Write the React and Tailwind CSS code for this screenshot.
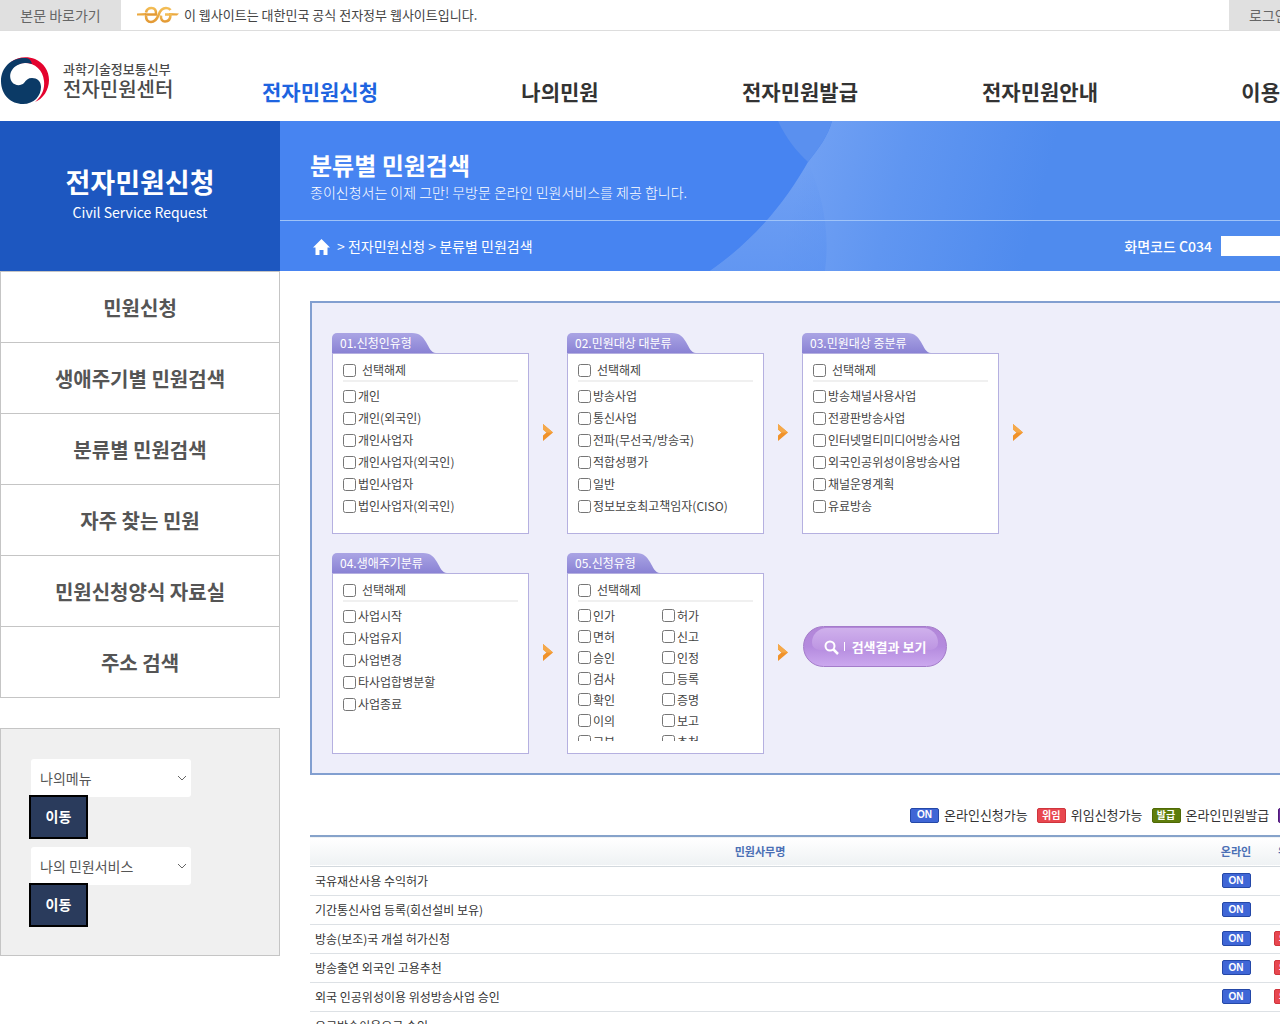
import React from 'react';
import clsx from 'clsx';

const NAV = ['전자민원신청', '나의민원', '전자민원발급', '전자민원안내', '이용안내'];

const SIDE_MENU = [
  '민원신청',
  '생애주기별 민원검색',
  '분류별 민원검색',
  '자주 찾는 민원',
  '민원신청양식 자료실',
  '주소 검색',
];

const FILTER_ROWS = [
  [
    {
      id: 'applicant',
      title: '01.신청인유형',
      items: ['개인', '개인(외국인)', '개인사업자', '개인사업자(외국인)', '법인사업자', '법인사업자(외국인)'],
    },
    {
      id: 'large',
      title: '02.민원대상 대분류',
      items: ['방송사업', '통신사업', '전파(무선국/방송국)', '적합성평가', '일반', '정보보호최고책임자(CISO)'],
    },
    {
      id: 'middle',
      title: '03.민원대상 중분류',
      items: ['방송채널사용사업', '전광판방송사업', '인터넷멀티미디어방송사업', '외국인공위성이용방송사업', '채널운영계획', '유료방송'],
    },
  ],
  [
    {
      id: 'life',
      title: '04.생애주기분류',
      items: ['사업시작', '사업유지', '사업변경', '타사업합병분할', '사업종료'],
    },
    {
      id: 'kind',
      title: '05.신청유형',
      twoColumns: true,
      items: ['인가', '허가', '면허', '신고', '승인', '인정', '검사', '등록', '확인', '증명', '이의', '보고', '교부', '추천'],
    },
  ],
];

const SERVICES = [
  { name: '국유재산사용 수익허가', online: true, delegate: false },
  { name: '기간통신사업 등록(회선설비 보유)', online: true, delegate: false },
  { name: '방송(보조)국 개설 허가신청', online: true, delegate: true },
  { name: '방송출연 외국인 고용추천', online: true, delegate: true },
  { name: '외국 인공위성이용 위성방송사업 승인', online: true, delegate: true },
  { name: '유료방송이용요금 승인', online: false, delegate: false },
];

const BADGE_STYLES = {
  on: "bg-[#3f66d6] border-[#2448a8] font-['Liberation_Sans',sans-serif]",
  delegate: 'bg-[#e8474f] border-[#cf353d]',
  issue: 'bg-[#5f7d0c] border-[#4f6a06]',
  visit: 'bg-[#6a2a9c] border-[#4f1c78]',
};

function Badge({ kind, children }) {
  return (
    <span
      className={clsx(
        'inline-flex h-[15px] w-[29px] shrink-0 items-center justify-center rounded-[2px] border text-[10px] leading-none font-bold text-white',
        BADGE_STYLES[kind],
      )}
    >
      {children}
    </span>
  );
}

function EgMark() {
  return (
    <svg width="42" height="18" viewBox="0 0 42 18" aria-hidden="true">
      <defs>
        <linearGradient id="eg-gold" x1="0" y1="0" x2="0" y2="1">
          <stop offset="0" stopColor="#f3bd55" />
          <stop offset="1" stopColor="#e39a35" />
        </linearGradient>
      </defs>
      <path d="M0 7.500 9 7V9.500H0Z" fill="#eba940" />
      <path d="M42 7.500 32 7V9.500H40Z" fill="#eba940" />
      <g fill="none" stroke="url(#eg-gold)" strokeWidth="2.600">
        <path d="M8 8.500H19C19.500 4 17.500 2 14.500 2S9.500 4 9 6.500" />
        <path d="M9 10C9 14 11 16 14 16 18 16 20 13 21.500 9 23 4.500 25 2 29 2 31 2 32.500 2.500 33.500 4" />
        <path d="M24 9.500C23.500 13.500 25.500 15.500 28 15.500 31.500 15.500 33.500 13 33.500 8.500H28" />
      </g>
    </svg>
  );
}

function GovEmblem() {
  return (
    <svg width="50" height="48" viewBox="0 0 50 48" aria-hidden="true">
      <path d="M11 5C17 0 27-1 35 2c9 4 14 12 14 21 0 10-6 19-14 22 6-5 10-12 9-21C43 13 35 6 25 6c-5 0-10 2-13 5Z" fill="#e4032e" />
      <path d="M26 1C12 0 1 10 1 24s10 23 22 23c11 0 18-8 18-17 0-6-4-9-9-9-4 0-6 2-8 5-3 3-9 3-12-1C7 17 13 7 25 6c3 0 5 0 7 1C31 3 29 1 26 1Z" fill="#0b3a66" />
    </svg>
  );
}

function StepArrow() {
  return (
    <div className="mb-[2px] flex w-[38px] shrink-0 justify-center">
      <svg width="10" height="17" viewBox="0 0 10 17" aria-hidden="true">
        <path d="M0 0 10 8.500 0 17V11.500L3.500 8.500 0 5.500Z" fill="#f0922a" />
        <path d="M0 0 10 8.500H3.500L0 5.500Z" fill="#f5a94a" />
      </svg>
    </div>
  );
}

function FilterCard({ filter }) {
  return (
    <fieldset className="w-[197px] shrink-0">
      <legend className="flex h-5">
        <span className="rounded-tl-[5px] bg-linear-to-b from-[#aaa4e4] to-[#8a82d4] pl-2 text-[12px] leading-5 text-white">
          {filter.title}
        </span>
        <svg width="24" height="20" viewBox="0 0 24 20" aria-hidden="true">
          <defs>
            <linearGradient id={`tab-${filter.id}`} x1="0" y1="0" x2="0" y2="1">
              <stop offset="0" stopColor="#aaa4e4" />
              <stop offset="1" stopColor="#8a82d4" />
            </linearGradient>
          </defs>
          <path d="M0 0C8 0 11 4 14 9S19 20 24 20H0Z" fill={`url(#tab-${filter.id})`} />
        </svg>
      </legend>
      <div className="h-[181px] border border-[#b5b0e0] bg-white px-[10px]">
        <label className="flex h-7 items-center gap-[6px] border-b-2 border-[#f0f0f0] pt-[6px] text-[12px] leading-5">
          <input type="checkbox" className="size-[13px]" />
          선택해제
        </label>
        <ul
          className={clsx(
            'mt-[3px] h-[136px] overflow-hidden text-[12px]',
            filter.twoColumns && 'grid grid-cols-[84px_84px] auto-rows-[21px]',
          )}
        >
          {filter.items.map((item) => (
            <li key={item} className={filter.twoColumns ? 'h-[21px]' : 'h-[22px]'}>
              <label className="flex h-full items-center gap-[2px] leading-5 whitespace-nowrap">
                <input type="checkbox" className="size-[13px]" />
                {item}
              </label>
            </li>
          ))}
        </ul>
      </div>
    </fieldset>
  );
}

function QuickSelect({ id, label }) {
  return (
    <div>
      <label htmlFor={id} className="sr-only">{label}</label>
      <div className="relative w-40">
        <select
          id={id}
          className="block h-[38px] w-full appearance-none rounded-[3px] bg-white pl-[9px] text-[14px] text-[#555]"
        >
          <option>{label}</option>
        </select>
        <svg
          className="pointer-events-none absolute top-4 right-1"
          width="10"
          height="7"
          viewBox="0 0 10 7"
          fill="none"
          stroke="#666"
          aria-hidden="true"
        >
          <path d="M1 1 5 5 9 1" />
        </svg>
      </div>
      <button
        type="button"
        className="relative block h-10 w-[55px] bg-[#2a3b5c] pb-[2px] text-[14px] font-bold text-white outline-2 outline-black"
      >
        이동
      </button>
    </div>
  );
}

function TopBar() {
  return (
    <div className="flex h-[31px] items-center border-b border-[#ddd]">
      <a href="#content" className="h-[30px] w-[121px] bg-[#e0e0e0] text-center text-[14px] leading-[30px] text-[#666]">
        본문 바로가기
      </a>
      <div className="flex items-center gap-[5px] pl-4">
        <EgMark />
        <span className="text-[13px] text-[#444]">이 웹사이트는 대한민국 공식 전자정부 웹사이트입니다.</span>
      </div>
      <div className="ml-auto flex h-[30px] w-[171px] items-center gap-6 bg-[#e0e0e0] pl-5 text-[14px] text-[#666]">
        <a href="#login">로그인</a>
        <a href="#join">회원가입</a>
      </div>
    </div>
  );
}

function Header() {
  return (
    <header className="flex h-[90px]">
      <a href="#home" className="flex w-[200px] items-center gap-[13px] pt-[10px]">
        <GovEmblem />
        <span className="pb-[2px] text-[#4a4a4a]">
          <span className="block text-[13px] leading-[18px] font-medium">과학기술정보통신부</span>
          <span className="block text-[20px] leading-[22px] font-medium">전자민원센터</span>
        </span>
      </a>
      <nav className="flex flex-1 pt-[30px]">
        {NAV.map((item, i) => (
          <a
            key={item}
            href="#menu"
            className={clsx(
              'flex-1 text-center text-[21px] leading-[60px] font-bold',
              i === 0 ? 'text-[#1e64e0]' : 'text-[#333]',
            )}
          >
            {item}
          </a>
        ))}
      </nav>
    </header>
  );
}

function Sidebar() {
  return (
    <aside className="w-[280px] shrink-0">
      <div className="flex h-[150px] flex-col items-center bg-[#1d57c0] pt-[42px] text-white">
        <h2 className="text-[27px] leading-[38px] font-bold">전자민원신청</h2>
        <p className="text-[14px] leading-[22px]">Civil Service Request</p>
      </div>
      <ul className="border-x border-b border-[#c5c5c5]">
        {SIDE_MENU.map((item) => (
          <li key={item} className="border-t border-[#c5c5c5]">
            <a href="#side" className="block pt-[2px] text-center text-[20px] leading-[68px] font-bold text-[#555]">
              {item}
            </a>
          </li>
        ))}
      </ul>
      <div className="mt-[30px] flex flex-col gap-[10px] border border-[#c5c5c5] bg-[#f0f0f0] p-[30px]">
        <QuickSelect id="my-menu" label="나의메뉴" />
        <QuickSelect id="my-service" label="나의 민원서비스" />
      </div>
    </aside>
  );
}

function Banner() {
  return (
    <div className="relative bg-[#4784f1] text-white">
      <svg
        className="absolute inset-0 size-full"
        viewBox="0 0 1120 150"
        preserveAspectRatio="xMinYMin slice"
        aria-hidden="true"
      >
        <defs>
          <linearGradient id="glow" gradientUnits="userSpaceOnUse" x1="530" y1="20" x2="760" y2="80">
            <stop offset="0" stopColor="#70a0f3" />
            <stop offset="0.4" stopColor="#6096f1" />
            <stop offset="1" stopColor="#4f8bee" />
          </linearGradient>
          <linearGradient id="haze" x1="0" y1="0" x2="0" y2="1">
            <stop offset="0" stopColor="#5890f1" stopOpacity="0" />
            <stop offset="1" stopColor="#5890f1" stopOpacity="0.6" />
          </linearGradient>
        </defs>
        <path d="M430 150C480 115 508 76 528 41 539 27 548 15 552 0H1120V150Z" fill="url(#glow)" />
        <path d="M498 0C506 17 516 30 528 41 539 27 548 15 552 0Z" fill="#5a90ef" />
        <path d="M528 41C543 75 550 110 545 150H430C480 115 508 76 528 41Z" fill="url(#haze)" />
      </svg>
      <div className="relative h-[100px] border-b border-[#9fc3f8] pt-[27px] pl-[30px]">
        <h1 className="text-[24px] leading-[34px] font-bold">분류별 민원검색</h1>
        <p className="text-[14px] leading-5 font-light">종이신청서는 이제 그만! 무방문 온라인 민원서비스를 제공 합니다.</p>
      </div>
      <div className="relative flex h-[50px] items-center pr-[30px] pl-[33px] text-[14px]">
        <svg width="17" height="18" viewBox="0 0 17 18" fill="#fff" aria-hidden="true">
          <path d="M8.500 2 17 10.500H14.500V18H10.500V13H6.500V18H2.500V10.500H0Z" />
        </svg>
        <span className="ml-[7px]">&gt; 전자민원신청 &gt; 분류별 민원검색</span>
        <label htmlFor="screen-code" className="ml-auto font-medium">화면코드 C034</label>
        <input id="screen-code" type="text" className="ml-[9px] h-5 w-[149px] bg-white text-[#333]" />
      </div>
    </div>
  );
}

function SearchButton() {
  return (
    <button
      type="button"
      className="relative mb-[14px] ml-px flex h-[41px] w-36 items-center justify-center rounded-full border border-[#a47cca] bg-linear-to-b from-[#b286d8] via-[#b48ade] to-[#cba8ee] text-[13px] font-bold text-white"
    >
      <span className="absolute inset-x-2 top-px h-[22px] rounded-t-[16px] rounded-b-[8px] bg-linear-to-b from-[#cfb0ec] to-[#bd95e2]" />
      <svg className="relative" width="28" height="16" viewBox="0 0 28 16" fill="none" stroke="#fff" aria-hidden="true">
        <circle cx="6" cy="7" r="4.500" strokeWidth="2" />
        <path d="M9.500 10.500 14 15" strokeWidth="2.500" />
        <path d="M20.500 3V12" />
      </svg>
      <span className="relative">검색결과 보기</span>
    </button>
  );
}

function FilterPanel() {
  return (
    <form className="flex flex-col gap-[19px] border-2 border-[#829fd0] bg-[#eeeefa] pt-[30px] pb-[19px] pl-5 text-[#444]">
      {FILTER_ROWS.map((row, i) => (
        <div key={row[0].id} className="flex items-center">
          {row.map((filter) => (
            <React.Fragment key={filter.id}>
              <FilterCard filter={filter} />
              <StepArrow />
            </React.Fragment>
          ))}
          {i === 1 && <SearchButton />}
        </div>
      ))}
    </form>
  );
}

function Legend() {
  const entries = [
    { kind: 'on', mark: 'ON', text: '온라인신청가능' },
    { kind: 'delegate', mark: '위임', text: '위임신청가능' },
    { kind: 'issue', mark: '발급', text: '온라인민원발급' },
    { kind: 'visit', mark: '방문', text: '방문우편신청' },
  ];
  return (
    <ul className="flex h-[60px] items-center gap-[9px] pt-5 pl-[600px] text-[13px] text-[#333]">
      {entries.map((entry) => (
        <li key={entry.kind} className="flex items-center gap-[5px] whitespace-nowrap">
          <Badge kind={entry.kind}>{entry.mark}</Badge>
          {entry.text}
        </li>
      ))}
    </ul>
  );
}

function ServiceTable() {
  return (
    <table className="w-full table-fixed border-collapse text-[12px] text-[#333]">
      <thead>
        <tr className="h-[30px] border-t-2 border-b border-t-[#86a3ca] border-b-[#d3d9de] bg-linear-to-b from-white to-[#eff2f4] text-[11px] text-[#4a6fb5]">
          <th className="font-bold">민원사무명</th>
          <th className="w-[52px] font-bold">온라인</th>
          <th className="w-[52px] font-bold">위임</th>
          <th className="w-[43px] font-bold">발급</th>
          <th className="w-[43px] font-bold">방문</th>
        </tr>
      </thead>
      <tbody>
        {SERVICES.map((service) => (
          <tr key={service.name} className="h-[29px] border-b border-[#dde1e5]">
            <td className="pl-[5px]"><a href="#service">{service.name}</a></td>
            <td>
              <div className="flex justify-center">
                {service.online && <Badge kind="on">ON</Badge>}
              </div>
            </td>
            <td>
              <div className="flex justify-center">
                {service.delegate && <Badge kind="delegate">위임</Badge>}
              </div>
            </td>
            <td />
            <td />
          </tr>
        ))}
      </tbody>
    </table>
  );
}

export default function App() {
  return (
    <div className="overflow-x-clip bg-white font-['Noto_Sans_CJK_KR',sans-serif]">
      <div className="min-w-[1400px]">
        <TopBar />
        <Header />
        <div className="flex">
          <Sidebar />
          <main id="content" className="min-w-0 flex-1">
            <Banner />
            <div className="pt-[30px] pl-[30px]">
              <FilterPanel />
              <Legend />
              <ServiceTable />
            </div>
          </main>
        </div>
      </div>
    </div>
  );
}
